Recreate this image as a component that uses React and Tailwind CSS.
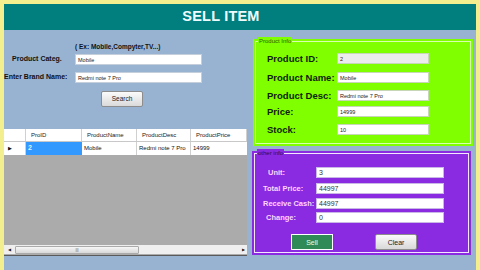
import React from 'react';

const font = { fontFamily: '"Liberation Sans", Arial, sans-serif' };

function GreenRow({ label, value, mt, disabled }) {
  return (
    <div className="flex items-center h-[11px]" style={{ marginTop: mt }}>
      <div className="w-[81px] pl-[11px] text-[9.5px] font-bold leading-none text-[#10220a] whitespace-nowrap">{label}</div>
      <div
        className={
          'w-[92px] h-[11px] border border-[#c8d6b8] pl-[2px] text-[5.5px] leading-[10px] text-[#222] ' +
          (disabled ? 'bg-[#ececec]' : 'bg-white')
        }
      >
        {value}
      </div>
    </div>
  );
}

function PurpleRow({ label, value, mt, indent }) {
  return (
    <div className="flex items-center h-[11px]" style={{ marginTop: mt }}>
      <div
        className="w-[56px] text-[7.5px] font-bold leading-none text-[#ffd6ff] whitespace-nowrap"
        style={{ paddingLeft: indent }}
      >
        {label}
      </div>
      <div className="w-[128px] h-[11px] bg-white border border-[#c9b8e6] pl-[2px] text-[7px] leading-[10px] text-[#333]">
        {value}
      </div>
    </div>
  );
}

export default function App() {
  const cols = [
    { name: 'ProID', w: 'w-[56px]' },
    { name: 'ProductName', w: 'w-[55px]' },
    { name: 'ProductDesc', w: 'w-[54px]' },
    { name: 'ProductPrice', w: 'w-[56px]' },
  ];

  return (
    <div className="w-[480px] h-[270px] bg-[#f3ef8e] pl-[4px] pt-[4px] pr-[4px] overflow-hidden" style={font}>
      <div className="w-[472px] h-[266px] bg-[#98b3d1] flex flex-col">
        {/* header */}
        <div className="h-[26px] bg-[#007f7e] flex items-center justify-center pr-[38px]">
          <span className="text-[14.5px] font-bold text-[#effcff] tracking-[0.2px]">SELL ITEM</span>
        </div>

        <div className="flex flex-1">
          {/* left side */}
          <div className="w-[244px] flex flex-col">
            <div className="mt-[13px] pl-[71px] text-[6.5px] font-bold leading-[8px] text-[#111]">( Ex: Mobile,Compyter,TV...)</div>
            <div className="flex items-center mt-[3px] h-[11px]">
              <div className="w-[71px] pl-[8px] text-[7px] font-bold text-[#111] whitespace-nowrap">Product Categ.</div>
              <div className="w-[127px] h-[11px] bg-white border border-[#c5cfdc] pl-[2px] text-[5.5px] leading-[10px] text-[#222]">Mobile</div>
            </div>
            <div className="flex items-center mt-[7px] h-[11px]">
              <div className="w-[71px] text-[7px] font-bold text-[#111] whitespace-nowrap">Enter Brand Name:</div>
              <div className="w-[127px] h-[11px] bg-white border border-[#c5cfdc] pl-[2px] text-[5.5px] leading-[10px] text-[#222]">Redmi note 7 Pro</div>
            </div>
            <div className="flex mt-[8px] pl-[97px]">
              <button className="w-[42px] h-[16px] rounded-[2px] border border-[#8d8d8d] bg-gradient-to-b from-[#fbfbfb] to-[#dadada] text-[6.5px] text-[#222] leading-none">
                Search
              </button>
            </div>

            {/* grid */}
            <div className="mt-[22px] w-[243px] h-[127px] bg-[#ababab] border-b border-[#5a5a5a] flex flex-col">
              <div className="flex h-[13px] bg-white border-b border-[#c8c8c8]">
                <div className="w-[22px] border-r border-[#d0d0d0]" />
                {cols.map((c) => (
                  <div key={c.name} className={c.w + ' border-r border-[#d0d0d0] text-[6px] leading-[12px] pl-[5px] text-[#222]'}>
                    {c.name}
                  </div>
                ))}
              </div>
              <div className="flex h-[13px] bg-white">
                <div className="w-[22px] border-r border-[#d0d0d0] flex items-center pl-[4px] text-[5px] text-[#111]">▶</div>
                <div className="w-[56px] bg-[#3399ff] text-[7px] leading-[12px] pl-[2px] text-[#dff0ff] font-bold">2</div>
                <div className="w-[55px] border-r border-[#d0d0d0] text-[6px] leading-[12px] pl-[2px] text-[#111]">Mobile</div>
                <div className="w-[54px] border-r border-[#d0d0d0] text-[6px] leading-[12px] pl-[2px] text-[#111]">Redmi note 7 Pro</div>
                <div className="w-[56px] text-[6px] leading-[12px] pl-[2px] text-[#111]">14999</div>
              </div>
              <div className="flex-1" />
              <div className="h-[9px] mb-[1px] bg-[#efefef] flex items-center">
                <div className="w-[11px] text-[4px] text-center text-[#222]">◀</div>
                <div className="w-[124px] h-[8px] bg-gradient-to-b from-[#f6f6f6] to-[#d9d9d9] border border-[#aaaaaa] rounded-[1px] flex items-center justify-center text-[4px] text-[#555]">|||</div>
                <div className="flex-1" />
                <div className="w-[8px] text-[4px] text-center text-[#222]">▶</div>
              </div>
            </div>
          </div>

          {/* right side */}
          <div className="flex-1 flex flex-col">
            {/* product info */}
            <div className="mt-[9px] ml-[5px] w-[220px] h-[107px] bg-[#80ff00] p-[2px]">
              <div className="relative h-full border border-[#d8ffb0]">
                <span className="absolute -top-[5px] left-[2px] bg-[#80ff00] px-[1px] text-[6px] leading-[8px] text-[#2a5a00]">Product Info</span>
                <GreenRow label="Product ID:" value="2" mt={11} disabled />
                <GreenRow label="Product Name:" value="Mobile" mt={8} />
                <GreenRow label="Product Desc:" value="Redmi note 7 Pro" mt={7} />
                <GreenRow label="Price:" value="14999" mt={5} />
                <GreenRow label="Stock:" value="10" mt={7} />
              </div>
            </div>

            {/* other info */}
            <div className="mt-[5px] ml-[4px] w-[219px] h-[104px] bg-[#8a2be2] p-[2px]">
              <div className="relative h-full border border-[#f4e6ff]">
                <span className="absolute -top-[5px] left-[2px] bg-[#8a2be2] px-[1px] text-[6px] leading-[8px] text-[#2d0a55]">other info</span>
                <div className="pl-[5px]">
                  <PurpleRow label="Unit:" value="3" mt={13} indent={8} />
                  <PurpleRow label="Total Price:" value="44997" mt={5} indent={3} />
                  <PurpleRow label="Receive Cash:" value="44997" mt={4} indent={3} />
                  <PurpleRow label="Change:" value="0" mt={3} indent={6} />
                </div>
                <div className="flex mt-[11px] pl-[36px] gap-[42px]">
                  <button className="w-[42px] h-[16px] bg-[#2f8a57] border border-white text-[7px] text-[#e6ffe6] leading-none">
                    Sell
                  </button>
                  <button className="w-[42px] h-[16px] rounded-[2px] border border-[#8d8d8d] bg-gradient-to-b from-[#fbfbfb] to-[#d8d8d8] text-[7px] text-[#222] leading-none">
                    Clear
                  </button>
                </div>
              </div>
            </div>
          </div>
        </div>
      </div>
    </div>
  );
}
